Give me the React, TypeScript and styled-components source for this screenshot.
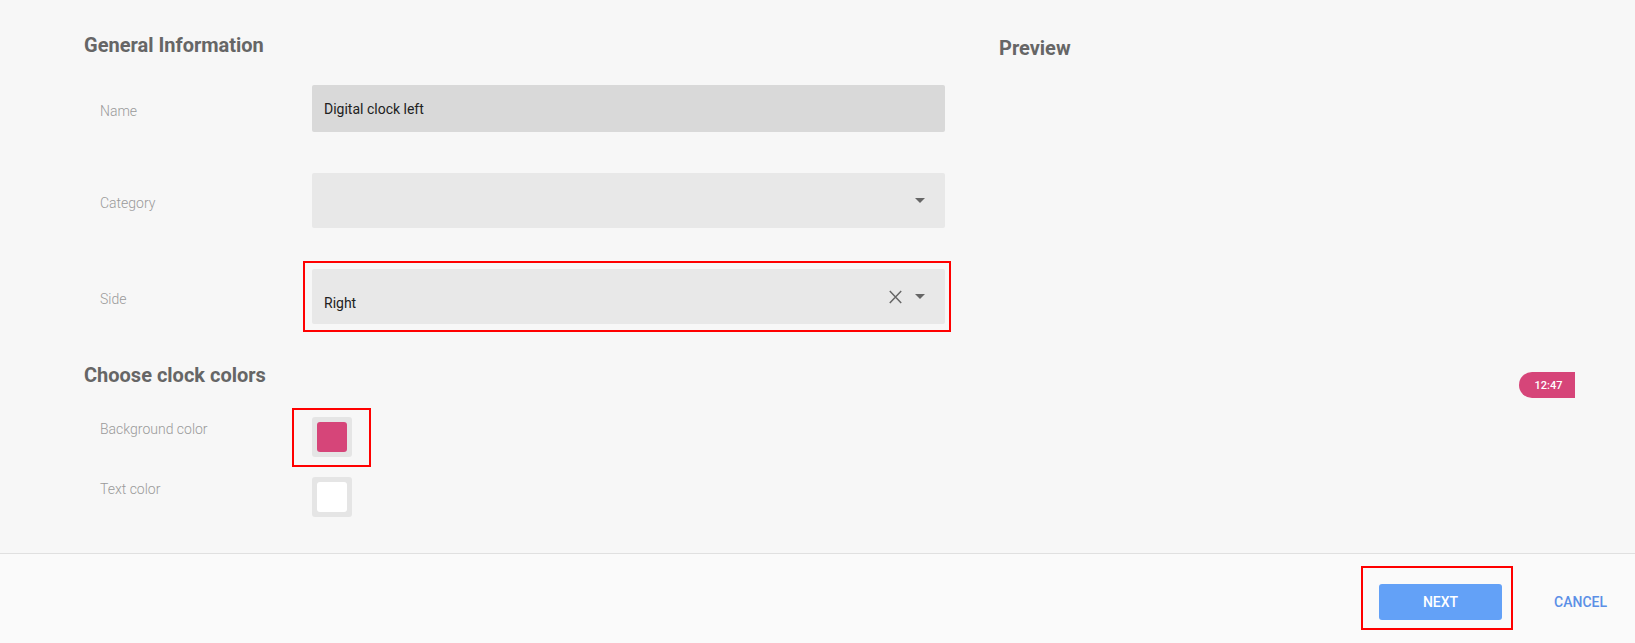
import React from "react";
import styled, { createGlobalStyle } from "styled-components";

const GlobalStyle = createGlobalStyle`
  html, body {
    margin: 0;
    padding: 0;
    background: #f7f7f7;
    font-family: Roboto, "Liberation Sans", Arial, sans-serif;
  }
  * {
    box-sizing: border-box;
  }
`;

type Inset = { t: number; r: number; b: number; l: number };

const Page = styled.div`
  display: flex;
  flex-direction: column;
  height: 100vh;
`;

const Main = styled.div`
  flex: 1;
  display: flex;
  padding: 33px 60px 0 84px;
  background: #f7f7f7;
`;

const FormColumn = styled.div`
  width: 861px;
  flex-shrink: 0;
  display: flex;
  flex-direction: column;
`;

const SectionTitle = styled.h2<{ $spaced?: boolean }>`
  margin: ${(p) => (p.$spaced ? "39px 0 0" : "0")};
  font-size: 20px;
  line-height: 24px;
  font-weight: 700;
  color: #666;
`;

const FieldList = styled.div`
  display: flex;
  flex-direction: column;
  gap: 41px;
  margin-top: 28px;
`;

const FieldRow = styled.div`
  display: flex;
  align-items: center;
  padding-left: 16px;
`;

const FieldLabel = styled.div<{ $top?: boolean }>`
  width: 212px;
  flex-shrink: 0;
  font-size: 14px;
  line-height: 20px;
  font-weight: 300;
  color: #9a9a9a;
  padding-top: ${(p) => (p.$top ? "2px" : "5px")};
`;

const TextField = styled.div`
  flex: 1;
  height: 47px;
  display: flex;
  align-items: center;
  padding: 0 12px;
  background: #d9d9d9;
  border-radius: 2px;
  font-size: 14px;
  color: #212121;
`;

const Select = styled.div`
  flex: 1;
  height: 55px;
  display: flex;
  align-items: center;
  padding: 0 20px 0 12px;
  background: #e8e8e8;
  border-radius: 2px;
`;

const SelectValue = styled.div`
  flex: 1;
  align-self: flex-end;
  padding-bottom: 11px;
  font-size: 14px;
  line-height: 20px;
  color: #212121;
`;

const SelectIcons = styled.div`
  display: flex;
  align-items: center;
  gap: 13px;

  svg {
    display: block;
  }
`;

const Highlight = styled.div<{ $inset: Inset; $grow?: boolean }>`
  position: relative;
  display: flex;
  flex: ${(p) => (p.$grow ? 1 : "0 0 auto")};

  &::after {
    content: "";
    position: absolute;
    top: -${(p) => p.$inset.t}px;
    right: -${(p) => p.$inset.r}px;
    bottom: -${(p) => p.$inset.b}px;
    left: -${(p) => p.$inset.l}px;
    border: 2px solid #ff0000;
    pointer-events: none;
  }
`;

const ColorList = styled.div`
  display: flex;
  flex-direction: column;
  gap: 20px;
  margin-top: 30px;
`;

const ColorRow = styled.div`
  display: flex;
  align-items: flex-start;
  padding-left: 16px;
`;

const Swatch = styled.div`
  width: 40px;
  height: 40px;
  padding: 5px;
  background: #e5e5e5;
  border-radius: 3px;
`;

const SwatchFill = styled.div<{ $color: string }>`
  width: 30px;
  height: 30px;
  border-radius: 3px;
  background: ${(p) => p.$color};
`;

const PreviewColumn = styled.div`
  flex: 1;
  display: flex;
  flex-direction: column;
  margin-left: 54px;
  padding-top: 3px;
`;

const ClockPill = styled.div`
  align-self: flex-end;
  margin-top: 312px;
  width: 56px;
  height: 26px;
  display: flex;
  align-items: center;
  justify-content: center;
  padding-left: 3px;
  background: #d64579;
  border-radius: 13px 0 0 13px;
  color: #fff;
  font-size: 11px;
  font-weight: 500;
`;

const Footer = styled.div`
  height: 90px;
  flex-shrink: 0;
  display: flex;
  align-items: flex-start;
  justify-content: flex-end;
  gap: 52px;
  padding: 30px 28px 0 0;
  background: #fafafa;
  border-top: 1px solid #e0e0e0;
`;

const PrimaryButton = styled.button`
  width: 123px;
  height: 36px;
  border: none;
  border-radius: 3px;
  background: #63a1f7;
  color: #fff;
  font-family: inherit;
  font-size: 14px;
  font-weight: 500;
  cursor: pointer;
`;

const TextButton = styled.button`
  height: 36px;
  padding: 0;
  border: none;
  background: none;
  color: #5b8fe6;
  font-family: inherit;
  font-size: 14px;
  font-weight: 500;
  cursor: pointer;
`;

const ClearIcon = () => (
  <svg width="13" height="14" viewBox="0 0 13 14">
    <path d="M0.8 1 L12.2 13 M12.2 1 L0.8 13" stroke="#666" strokeWidth="1.5" fill="none" />
  </svg>
);

const CaretIcon = () => (
  <svg width="10" height="5" viewBox="0 0 10 5">
    <path d="M0 0 L10 0 L5 5 Z" fill="#666" />
  </svg>
);

const App: React.FC = () => {
  return (
    <>
      <GlobalStyle />
      <Page>
        <Main>
          <FormColumn>
            <SectionTitle>General Information</SectionTitle>
            <FieldList>
              <FieldRow>
                <FieldLabel>Name</FieldLabel>
                <TextField>Digital clock left</TextField>
              </FieldRow>
              <FieldRow>
                <FieldLabel>Category</FieldLabel>
                <Select>
                  <SelectValue />
                  <SelectIcons>
                    <CaretIcon />
                  </SelectIcons>
                </Select>
              </FieldRow>
              <FieldRow>
                <FieldLabel>Side</FieldLabel>
                <Highlight $inset={{ t: 8, r: 6, b: 8, l: 9 }} $grow>
                  <Select>
                    <SelectValue>Right</SelectValue>
                    <SelectIcons>
                      <ClearIcon />
                      <CaretIcon />
                    </SelectIcons>
                  </Select>
                </Highlight>
              </FieldRow>
            </FieldList>

            <SectionTitle $spaced>Choose clock colors</SectionTitle>
            <ColorList>
              <ColorRow>
                <FieldLabel $top>Background color</FieldLabel>
                <Highlight $inset={{ t: 9, r: 19, b: 10, l: 20 }}>
                  <Swatch>
                    <SwatchFill $color="#d64579" />
                  </Swatch>
                </Highlight>
              </ColorRow>
              <ColorRow>
                <FieldLabel $top>Text color</FieldLabel>
                <Swatch>
                  <SwatchFill $color="#ffffff" />
                </Swatch>
              </ColorRow>
            </ColorList>
          </FormColumn>

          <PreviewColumn>
            <SectionTitle>Preview</SectionTitle>
            <ClockPill>12:47</ClockPill>
          </PreviewColumn>
        </Main>

        <Footer>
          <Highlight $inset={{ t: 18, r: 11, b: 10, l: 18 }}>
            <PrimaryButton>NEXT</PrimaryButton>
          </Highlight>
          <TextButton>CANCEL</TextButton>
        </Footer>
      </Page>
    </>
  );
};

export default App;
